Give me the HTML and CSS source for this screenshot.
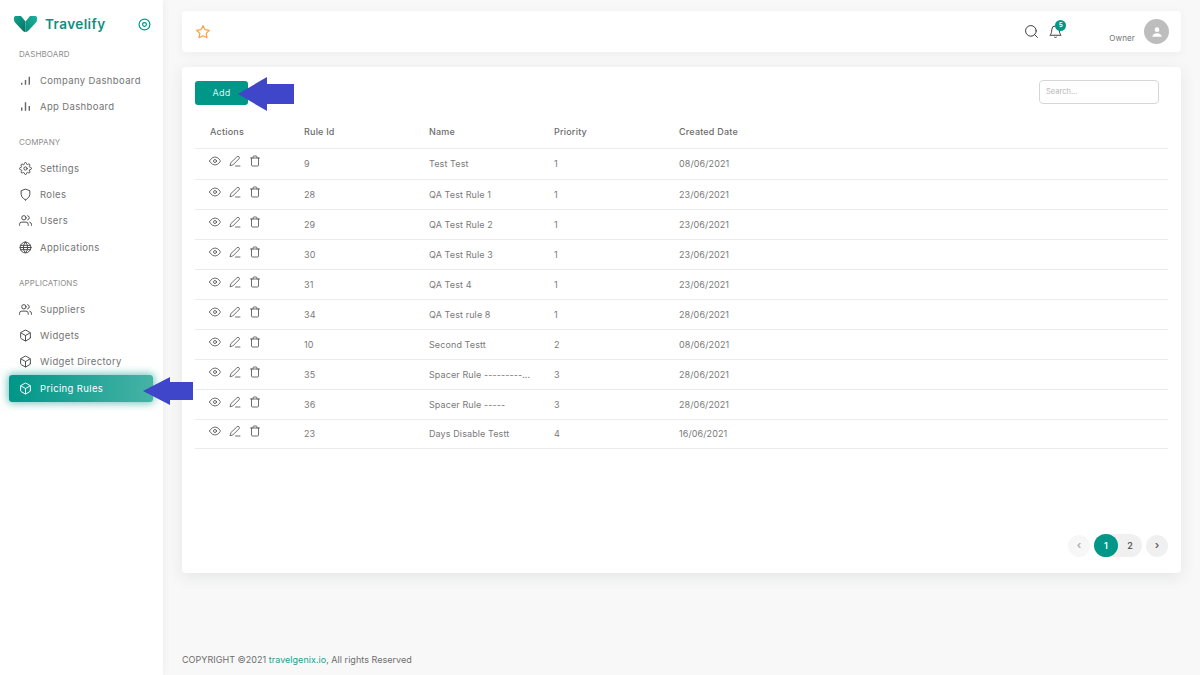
FILE: index.html
```html
<!DOCTYPE html>
<html lang="en">
<head>
<meta charset="utf-8">
<title>Pricing Rules</title>
<link rel="stylesheet" href="styles.css">
</head>
<body>
<svg class="defs" width="0" height="0" aria-hidden="true">
  <defs>
    <linearGradient id="logo-left" x1="0" y1="0" x2="1" y2="1"><stop offset="0" stop-color="#12a593"/><stop offset="1" stop-color="#07705f"/></linearGradient>
    <linearGradient id="logo-right" x1="1" y1="0" x2="0" y2="1"><stop offset="0" stop-color="#1cb3a0"/><stop offset="1" stop-color="#0a8a78"/></linearGradient>
    <symbol id="i-box" viewBox="0 0 24 24"><path d="M21 16V8a2 2 0 0 0-1-1.730l-7-4a2 2 0 0 0-2 0l-7 4A2 2 0 0 0 3 8v8a2 2 0 0 0 1 1.730l7 4a2 2 0 0 0 2 0l7-4A2 2 0 0 0 21 16z"/><path d="M3.300 7 12 12l8.700-5M12 22V12"/></symbol>
    <symbol id="i-users" viewBox="0 0 24 24"><path d="M17 21v-2a4 4 0 0 0-4-4H5a4 4 0 0 0-4 4v2"/><circle cx="9" cy="7" r="4"/><path d="M23 21v-2a4 4 0 0 0-3-3.870M16 3.130a4 4 0 0 1 0 7.750"/></symbol>
    <symbol id="i-eye" viewBox="0 0 24 24"><path d="M1 12s4-8 11-8 11 8 11 8-4 8-11 8-11-8-11-8z"/><circle cx="12" cy="12" r="3"/></symbol>
    <symbol id="i-edit" viewBox="0 0 24 24"><path d="M16 3.500a2.800 2.800 0 0 1 4 4L7.500 20 2 21.500 3.500 16z"/><path d="M13 22h9"/></symbol>
    <symbol id="i-trash" viewBox="0 0 24 24"><path d="M3 6h18M19 6v14a2 2 0 0 1-2 2H7a2 2 0 0 1-2-2V6M8 6V4a2 2 0 0 1 2-2h4a2 2 0 0 1 2 2v2"/></symbol>
  </defs>
</svg>
<div class="app">
  <aside class="sidebar">
    <div class="brand">
      <svg class="logo" viewBox="0 0 23 16"><path fill="url(#logo-left)" d="M0 1.500C0 .5 1 0 2 0h5l4.500 5.500V16c-1 0-2-.5-3-1.500L1 6.500C.3 5.800 0 5 0 4z"/><path fill="url(#logo-right)" d="M11.500 5.500 16 0h5c1 0 2 .5 2 1.500V4c0 1-.3 1.800-1 2.500l-7.500 8c-1 1-2 1.500-3 1.500z"/></svg>
      <span class="brand-name">Travelify</span>
      <svg class="toggle" viewBox="0 0 24 24"><circle cx="12" cy="12" r="10"/><circle cx="12" cy="12" r="3.500"/></svg>
    </div>
    <div class="nav-label">DASHBOARD</div>
    <a class="nav-item"><svg class="nav-icon bars" viewBox="0 0 24 24"><path d="M19 5v15M12 11v9M5 16v4"/></svg><span>Company Dashboard</span></a>
    <a class="nav-item"><svg class="nav-icon bars" viewBox="0 0 24 24"><path d="M12 4v16M19 11v9M5 14v6"/></svg><span>App Dashboard</span></a>
    <div class="nav-label section">COMPANY</div>
    <a class="nav-item"><svg class="nav-icon" viewBox="0 0 24 24"><circle cx="12" cy="12" r="3"/><path d="M19.400 15a1.650 1.650 0 0 0 .33 1.820l.06.06a2 2 0 1 1-2.830 2.830l-.06-.06a1.650 1.650 0 0 0-2.800 1.170V21a2 2 0 0 1-4 0v-.09A1.650 1.650 0 0 0 7.300 19.740l-.06.06a2 2 0 1 1-2.830-2.830l.06-.06a1.650 1.650 0 0 0-1.170-2.800H3a2 2 0 0 1 0-4h.09A1.650 1.650 0 0 0 4.260 7.300l-.06-.06a2 2 0 1 1 2.830-2.830l.06.06a1.650 1.650 0 0 0 2.800-1.170V3a2 2 0 0 1 4 0v.09a1.650 1.650 0 0 0 2.800 1.170l.06-.06a2 2 0 1 1 2.830 2.830l-.06.06a1.650 1.650 0 0 0 1.170 2.800H21a2 2 0 0 1 0 4h-.09a1.650 1.650 0 0 0-1.510 1z"/></svg><span>Settings</span></a>
    <a class="nav-item"><svg class="nav-icon" viewBox="0 0 24 24"><path d="M12 22s8-4 8-10V5l-8-3-8 3v7c0 6 8 10 8 10z"/></svg><span>Roles</span></a>
    <a class="nav-item"><svg class="nav-icon"><use href="#i-users"/></svg><span>Users</span></a>
    <a class="nav-item"><svg class="nav-icon" viewBox="0 0 24 24"><circle cx="12" cy="12" r="10"/><path d="M2 12h20M2.800 8h18.400M2.800 16h18.400M12 2a15 15 0 0 1 4 10 15 15 0 0 1-4 10 15 15 0 0 1-4-10 15 15 0 0 1 4-10z"/></svg><span>Applications</span></a>
    <div class="nav-label section">APPLICATIONS</div>
    <a class="nav-item"><svg class="nav-icon"><use href="#i-users"/></svg><span>Suppliers</span></a>
    <a class="nav-item"><svg class="nav-icon"><use href="#i-box"/></svg><span>Widgets</span></a>
    <a class="nav-item"><svg class="nav-icon"><use href="#i-box"/></svg><span>Widget Directory</span></a>
    <a class="nav-item active"><svg class="nav-icon"><use href="#i-box"/></svg><span>Pricing Rules</span></a>
  </aside>
  <main class="main">
    <header class="topbar">
      <svg class="star" viewBox="0 0 24 24"><path d="M12 2.500l2.950 6 6.600.95-4.780 4.650 1.130 6.570L12 17.560l-5.900 3.110 1.130-6.570L2.450 9.450l6.600-.95z"/></svg>
      <div class="top-right">
        <svg class="top-icon" viewBox="0 0 24 24"><circle cx="11" cy="11" r="8.500"/><path d="M21.500 21.500l-4.500-4.500"/></svg>
        <div class="bell">
          <svg class="top-icon" viewBox="0 0 24 24"><path d="M18 9A6 6 0 0 0 6 9c0 7-3 9-3 9h18s-3-2-3-9M13.700 21a2 2 0 0 1-3.400 0"/></svg>
          <span class="badge">5</span>
        </div>
        <span class="role">Owner</span>
        <div class="avatar"><svg viewBox="0 0 24 24"><circle cx="12" cy="8" r="4"/><path d="M4 20c0-4 4-6 8-6s8 2 8 6z"/></svg></div>
      </div>
    </header>
    <section class="card">
      <div class="toolbar">
        <button class="add-btn">Add</button>
        <input class="search" placeholder="Search...">
      </div>
      <table class="rules">
        <thead><tr><th>Actions</th><th>Rule Id</th><th>Name</th><th>Priority</th><th>Created Date</th></tr></thead>
        <tbody>
          <tr><td class="acts"><svg><use href="#i-eye"/></svg><svg><use href="#i-edit"/></svg><svg><use href="#i-trash"/></svg></td><td>9</td><td>Test Test</td><td>1</td><td>08/06/2021</td></tr>
          <tr><td class="acts"><svg><use href="#i-eye"/></svg><svg><use href="#i-edit"/></svg><svg><use href="#i-trash"/></svg></td><td>28</td><td>QA Test Rule 1</td><td>1</td><td>23/06/2021</td></tr>
          <tr><td class="acts"><svg><use href="#i-eye"/></svg><svg><use href="#i-edit"/></svg><svg><use href="#i-trash"/></svg></td><td>29</td><td>QA Test Rule 2</td><td>1</td><td>23/06/2021</td></tr>
          <tr><td class="acts"><svg><use href="#i-eye"/></svg><svg><use href="#i-edit"/></svg><svg><use href="#i-trash"/></svg></td><td>30</td><td>QA Test Rule 3</td><td>1</td><td>23/06/2021</td></tr>
          <tr><td class="acts"><svg><use href="#i-eye"/></svg><svg><use href="#i-edit"/></svg><svg><use href="#i-trash"/></svg></td><td>31</td><td>QA Test 4</td><td>1</td><td>23/06/2021</td></tr>
          <tr><td class="acts"><svg><use href="#i-eye"/></svg><svg><use href="#i-edit"/></svg><svg><use href="#i-trash"/></svg></td><td>34</td><td>QA Test rule 8</td><td>1</td><td>28/06/2021</td></tr>
          <tr><td class="acts"><svg><use href="#i-eye"/></svg><svg><use href="#i-edit"/></svg><svg><use href="#i-trash"/></svg></td><td>10</td><td>Second Testt</td><td>2</td><td>08/06/2021</td></tr>
          <tr><td class="acts"><svg><use href="#i-eye"/></svg><svg><use href="#i-edit"/></svg><svg><use href="#i-trash"/></svg></td><td>35</td><td>Spacer Rule ---------...</td><td>3</td><td>28/06/2021</td></tr>
          <tr><td class="acts"><svg><use href="#i-eye"/></svg><svg><use href="#i-edit"/></svg><svg><use href="#i-trash"/></svg></td><td>36</td><td>Spacer Rule -----</td><td>3</td><td>28/06/2021</td></tr>
          <tr><td class="acts"><svg><use href="#i-eye"/></svg><svg><use href="#i-edit"/></svg><svg><use href="#i-trash"/></svg></td><td>23</td><td>Days Disable Testt</td><td>4</td><td>16/06/2021</td></tr>
        </tbody>
      </table>
      <nav class="pager">
        <span class="pg-btn muted">‹</span>
        <div class="pg-group"><span class="pg-num current">1</span><span class="pg-num">2</span></div>
        <span class="pg-btn">›</span>
      </nav>
    </section>
    <footer class="footer">COPYRIGHT ©2021 <span class="link">travelgenix.io</span>, All rights Reserved</footer>
  </main>
</div>
<svg class="arrow arrow-add" viewBox="0 0 56 34"><path d="M0 17 29 0v7h27v20H29v7z"/></svg>
<svg class="arrow arrow-nav" viewBox="0 0 50 28"><path d="M0 14 27 0v5h23v18H27v5z"/></svg>
</body>
</html>
```
FILE: styles.css
```css
* { box-sizing: border-box; }
html, body { margin: 0; height: 100%; }
body {
  position: relative;
  width: 1200px;
  height: 675px;
  overflow: hidden;
  background: #f8f8f8;
  color: #747474;
  font-family: Inter, "Open Sans", "Liberation Sans", sans-serif;
  font-size: 9px;
}
.defs { position: absolute; }
svg { fill: none; stroke: currentColor; stroke-width: 2; stroke-linecap: round; stroke-linejoin: round; }
.app { display: flex; height: 675px; }

.sidebar {
  flex: 0 0 163px;
  background: #fff;
  box-shadow: 0 0 8px rgba(34, 41, 47, .06);
  padding: 14px 9px 0;
}
.brand { display: flex; align-items: center; height: 20px; padding-left: 5px; margin-bottom: 13px; }
.logo { width: 23px; height: 16px; stroke: none; }
.logo path { stroke: none; }
.brand-name { margin-left: 8px; color: #0d8f7e; font-size: 13.500px; font-weight: 600; letter-spacing: .42px; }
.toggle { width: 13px; height: 13px; margin-left: auto; margin-right: 3px; color: #009688; stroke-width: 2.200; }
.nav-label { height: 14px; line-height: 14px; padding-left: 10px; font-size: 8px; color: #8d8d8d; letter-spacing: .1px; }
.nav-label.section { margin-top: 16px; }
.nav-item {
  display: flex;
  align-items: center;
  height: 26.200px;
  padding-left: 10px;
  color: #747474;
  font-size: 9.500px;
  letter-spacing: .36px;
}
.nav-label + .nav-item { margin-top: 6px; }
.nav-icon { width: 13px; height: 13px; margin-right: 8px; color: #4a4a4a; stroke-width: 1.800; flex: none; }
.nav-icon.bars { stroke-width: 2.600; color: #666; stroke-linecap: butt; }
.nav-item.active {
  width: 144px;
  height: 27px;
  border-radius: 3px;
  color: #fff;
  background: linear-gradient(90deg, #009688, #46b3a5);
  box-shadow: 0 0 8px 1px rgba(0, 150, 136, .6);
}
.nav-item.active .nav-icon { color: #fff; }

.main { flex: 1; display: flex; flex-direction: column; padding: 11px 19px 0; min-width: 0; }
.topbar {
  display: flex;
  align-items: center;
  justify-content: space-between;
  height: 41px;
  padding: 0 12px 0 13px;
  background: #fff;
  border-radius: 4px;
  box-shadow: 0 2px 10px rgba(34, 41, 47, .05);
}
.star { width: 16px; height: 16px; color: #ff9f43; stroke-width: 1.800; }
.top-right { display: flex; align-items: center; }
.top-icon { display: block; width: 15px; height: 15px; color: #3d3d3d; stroke-width: 1.600; }
.bell { position: relative; margin-left: 9px; }
.badge {
  position: absolute;
  top: -4px;
  right: -3px;
  width: 11px;
  height: 11px;
  border-radius: 50%;
  background: #009688;
  color: #fff;
  font-size: 6.500px;
  font-weight: 600;
  line-height: 11px;
  text-align: center;
}
.role { margin-left: 46px; margin-top: 12px; font-size: 8px; color: #747474; letter-spacing: .15px; }
.avatar {
  width: 25px;
  height: 25px;
  margin-left: 9px;
  border-radius: 50%;
  background: #bdbdbd;
  display: flex;
  align-items: center;
  justify-content: center;
}
.avatar svg { width: 14px; height: 14px; fill: #fff; stroke: none; }

.card {
  height: 506px;
  margin-top: 15px;
  padding: 13px 13px 0;
  background: #fff;
  border-radius: 4px;
  box-shadow: 0 4px 16px rgba(34, 41, 47, .09);
  display: flex;
  flex-direction: column;
}
.toolbar { display: flex; justify-content: space-between; align-items: center; padding-right: 9px; height: 25px; }
.add-btn {
  width: 53px;
  height: 24px;
  padding: 0;
  border: 0;
  border-radius: 3px;
  background: #009688;
  color: #dff3f0;
  font: 9px Inter, "Open Sans", sans-serif;
  letter-spacing: .2px;
}
.search {
  width: 120px;
  height: 24px;
  margin-bottom: 2px;
  padding: 0 6px;
  border: 1px solid #d6d6d6;
  border-radius: 4px;
  background: #fff;
  font: 7.500px Inter, "Open Sans", sans-serif;
}
.search::placeholder { color: #b5b5b5; }
.rules { width: 973px; margin-top: 10px; border-collapse: collapse; table-layout: fixed; }
.rules th, .rules td { padding: 0 0 0 15px; text-align: left; border-bottom: 1px solid #ebebeb; }
.rules th { width: 125px; height: 33px; font-size: 9px; font-weight: 500; color: #6c6c6c; letter-spacing: .2px; }
.rules th:first-child { width: 94px; }
.rules th:last-child { width: auto; }
.rules td { height: 30px; font-size: 9px; color: #7a7a7a; letter-spacing: .1px; }
.rules tbody tr:first-child td { height: 31px; }
.rules tbody tr:last-child td { height: 29px; }
.rules td.acts { padding-bottom: 5px; }
.acts svg { width: 12px; height: 12px; margin-right: 8px; color: #4a4a4a; stroke-width: 1.600; vertical-align: middle; }
.acts svg:first-child { margin-left: -1px; }
.pager { display: flex; align-items: center; justify-content: flex-end; margin-top: auto; margin-bottom: 16px; font-size: 9px; font-weight: 600; }
.pg-btn {
  width: 22px;
  height: 22px;
  border-radius: 50%;
  background: #f0f0f0;
  text-align: center;
  line-height: 20px;
  font-size: 11px;
  color: #5e5e5e;
}
.pg-btn.muted { background: #f7f7f7; color: #aaa; }
.pg-group { display: flex; margin: 0 4px; background: #f0f0f0; border-radius: 12px; }
.pg-num { width: 24px; height: 23px; line-height: 23px; text-align: center; color: #5e5e5e; border-radius: 50%; }
.pg-num.current { background: #009688; color: #fff; }
.footer { margin-top: auto; padding-bottom: 10px; font-size: 9px; color: #6e6e6e; letter-spacing: .03px; }
.link { color: #1d9f90; }

.arrow { position: absolute; fill: #3f46c9; stroke: none; }
.arrow path { stroke: none; }
.arrow-add { left: 238px; top: 77px; width: 56px; height: 34px; }
.arrow-nav { left: 143px; top: 377px; width: 50px; height: 28px; }
```
